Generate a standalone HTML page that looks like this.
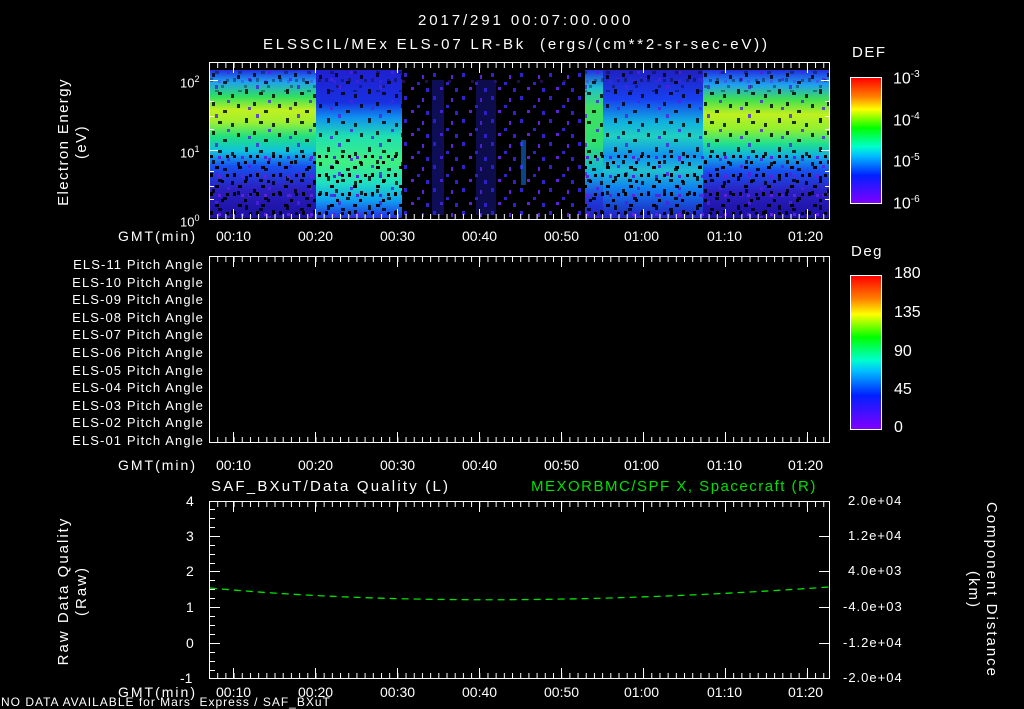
<!DOCTYPE html>
<html><head><meta charset="utf-8"><style>
body{margin:0;background:#000;width:1024px;height:708px;overflow:hidden;position:relative;font-family:"Liberation Sans",sans-serif;color:#fff}
.t{position:absolute;white-space:nowrap;font-size:14px;line-height:14px}
.seg{position:absolute}
.g{letter-spacing:2px}
</style></head><body>
<div class="t" style="left:418px;top:14px;font-size:15px;letter-spacing:2.9px">2017/291 00:07:00.000</div>
<div class="t" style="left:263px;top:38px;font-size:15px;letter-spacing:2.8px">ELSSCIL/MEx ELS-07 LR-Bk&nbsp; (ergs/(cm**2-sr-sec-eV))</div>

<!-- spectrogram -->
<div class="seg" style="left:210px;top:70px;width:106px;height:148px;background:linear-gradient(#2030e0 0%,#20a0f0 8%,#30e060 18%,#c0f020 27%,#a0f030 35%,#20e080 45%,#10c0e0 55%,#1850f0 65%,#2a20c0 80%,#1a10a0 100%)"></div>
<div class="seg" style="left:316px;top:70px;width:86px;height:148px;background:linear-gradient(#2020d0 0%,#1830e0 22%,#1090f0 32%,#20e0b0 45%,#40f080 62%,#20e0c0 76%,#10a0f0 88%,#2030e0 100%)"></div>
<div class="seg" style="left:585px;top:70px;width:18px;height:148px;background:linear-gradient(#2030e0 0%,#20c0d0 12%,#40e060 25%,#30e070 50%,#10b0e0 70%,#2040e0 85%,#2020c0 100%)"></div>
<div class="seg" style="left:603px;top:70px;width:100px;height:148px;background:linear-gradient(#2020c0 0%,#1840f0 20%,#10b0e0 35%,#20d0c0 45%,#1090f0 58%,#20c0d0 68%,#1080f0 80%,#2020c0 100%)"></div>
<div class="seg" style="left:703px;top:70px;width:126px;height:148px;background:linear-gradient(#2030e0 0%,#20a0f0 10%,#40e050 20%,#c0f020 30%,#90f030 40%,#20e090 50%,#10b0e0 58%,#1850f0 68%,#2a20c0 82%,#1a10a0 100%)"></div>

<!-- colorbars -->
<div class="seg" style="left:850px;top:77px;width:32px;height:127px;border:1px solid #fff;box-sizing:border-box;background:linear-gradient(#ff0000,#ff8000 15%,#ffff00 25%,#00ff00 40%,#00ffcc 55%,#00c0ff 62%,#0020ff 78%,#8000ff 100%)"></div>
<div class="seg" style="left:850px;top:275px;width:32px;height:155px;border:1px solid #fff;box-sizing:border-box;background:linear-gradient(#ff0000,#ff8000 15%,#ffff00 25%,#00ff00 40%,#00ffcc 55%,#00c0ff 62%,#0020ff 78%,#8000ff 100%)"></div>
<div class="t" style="left:852px;top:46px;font-size:15px;letter-spacing:1.5px">DEF</div>
<div class="t" style="left:893px;top:68px;font-size:16px">10<sup style="font-size:10px">-3</sup></div>
<div class="t" style="left:893px;top:110px;font-size:16px">10<sup style="font-size:10px">-4</sup></div>
<div class="t" style="left:893px;top:151px;font-size:16px">10<sup style="font-size:10px">-5</sup></div>
<div class="t" style="left:893px;top:193px;font-size:16px">10<sup style="font-size:10px">-6</sup></div>
<div class="t" style="left:851px;top:245px;font-size:15px;letter-spacing:1.5px">Deg</div>
<div class="t" style="left:894px;top:267px;font-size:16px">180</div>
<div class="t" style="left:894px;top:306px;font-size:16px">135</div>
<div class="t" style="left:894px;top:345px;font-size:16px">90</div>
<div class="t" style="left:894px;top:383px;font-size:16px">45</div>
<div class="t" style="left:894px;top:421px;font-size:16px">0</div>

<svg width="1024" height="708" style="position:absolute;left:0;top:0">
<defs>
<pattern id="tb" x="209" y="0" width="8.19" height="708" patternUnits="userSpaceOnUse"><line x1="0.5" y1="0" x2="0.5" y2="708" stroke="#fff"/></pattern>
<pattern id="sp" x="210" y="70" width="41" height="29" patternUnits="userSpaceOnUse">
<g fill="#000"><rect x="2" y="3" width="3" height="4"/><rect x="13" y="11" width="4" height="3"/><rect x="27" y="5" width="3" height="4"/><rect x="35" y="19" width="3" height="5"/><rect x="8" y="22" width="4" height="3"/><rect x="21" y="24" width="3" height="4"/></g>
<g fill="#5020e0"><rect x="17" y="1" width="3" height="3"/><rect x="5" y="15" width="3" height="4"/><rect x="38" y="8" width="3" height="3"/></g>
</pattern>
<pattern id="sp2" x="0" y="0" width="23" height="19" patternUnits="userSpaceOnUse">
<g fill="#000"><rect x="3" y="2" width="3" height="4"/><rect x="14" y="9" width="3" height="3"/><rect x="8" y="14" width="4" height="3"/><rect x="19" y="3" width="3" height="3"/></g>
<g fill="#6020e0"><rect x="11" y="4" width="3" height="3"/></g>
</pattern>
<pattern id="sb" x="402" y="70" width="29" height="23" patternUnits="userSpaceOnUse">
<g fill="#3020d0"><rect x="2" y="3" width="3" height="4"/><rect x="15" y="12" width="3" height="3"/><rect x="24" y="18" width="3" height="4"/></g>
<g fill="#6020e0"><rect x="9" y="17" width="3" height="3"/><rect x="20" y="5" width="2" height="4"/></g>
</pattern>
</defs>
<rect x="210" y="70" width="192" height="148" fill="url(#sp)" opacity=".8"/>
<rect x="585" y="70" width="244" height="148" fill="url(#sp)" opacity=".8"/>
<rect x="210" y="155" width="192" height="63" fill="url(#sp2)"/>
<rect x="585" y="155" width="244" height="63" fill="url(#sp2)"/>
<rect x="210" y="70" width="619" height="22" fill="url(#sp2)" opacity=".35"/>
<rect x="402" y="70" width="183" height="148" fill="url(#sb)"/>
<rect x="432" y="80" width="12" height="135" fill="#2020c0" opacity=".45"/>
<rect x="476" y="80" width="20" height="135" fill="#2020c0" opacity=".4"/>
<rect x="521" y="140" width="5" height="45" fill="#1070e0" opacity=".6"/>
<g fill="none" stroke="#fff">
<rect x="209.5" y="62.5" width="620" height="157"/>
<rect x="209.5" y="256.5" width="620" height="186"/>
<rect x="209.5" y="501.5" width="620" height="177"/>
</g>
<g fill="url(#tb)">
<rect x="210" y="63" width="619" height="5"/><rect x="210" y="214" width="619" height="5"/>
<rect x="210" y="257" width="619" height="5"/><rect x="210" y="437" width="619" height="5"/>
<rect x="210" y="502" width="619" height="5"/><rect x="210" y="673" width="619" height="5"/>
</g>
<g stroke="#fff">
<path d="M233.5 63v10M315.5 63v10M397.5 63v10M479.5 63v10M561.5 63v10M643.5 63v10M725.5 63v10M807.5 63v10M233.5 209v10M315.5 209v10M397.5 209v10M479.5 209v10M561.5 209v10M643.5 209v10M725.5 209v10M807.5 209v10"/>
<path d="M233.5 257v10M315.5 257v10M397.5 257v10M479.5 257v10M561.5 257v10M643.5 257v10M725.5 257v10M807.5 257v10M233.5 432v10M315.5 432v10M397.5 432v10M479.5 432v10M561.5 432v10M643.5 432v10M725.5 432v10M807.5 432v10"/>
<path d="M233.5 502v10M315.5 502v10M397.5 502v10M479.5 502v10M561.5 502v10M643.5 502v10M725.5 502v10M807.5 502v10M233.5 668v10M315.5 668v10M397.5 668v10M479.5 668v10M561.5 668v10M643.5 668v10M725.5 668v10M807.5 668v10"/>
<path d="M210 80.5h8M210 150.5h8M210 101.5h4M210 116.5h4M210 129.5h4M210 171.5h4M210 186.5h4M210 199.5h4M829 80.5h-8M829 150.5h-8M829 101.5h-4M829 116.5h-4M829 129.5h-4M829 171.5h-4M829 186.5h-4M829 199.5h-4"/>
<path d="M210 536.5h10M210 571.5h10M210 607.5h10M210 643.5h10M829 536.5h-10M829 571.5h-10M829 607.5h-10M829 643.5h-10M210 509.5h5M210 518.5h5M210 527.5h5M210 545.5h5M210 554.5h5M210 563.5h5M210 580.5h5M210 589.5h5M210 598.5h5M210 616.5h5M210 625.5h5M210 634.5h5M210 652.5h5M210 661.5h5M210 670.5h5"/>
</g>
<path d="M210 588 Q470 612 829 587" fill="none" stroke="#00e000" stroke-width="1.3" stroke-dasharray="7 5"/>
</svg>
<div class="t" style="left:-17px;top:124px;width:180px;text-align:center;transform:rotate(-90deg);font-size:15px;line-height:18px;letter-spacing:1.4px">Electron Energy<br>(eV)</div>
<div class="t" style="left:-37px;top:573px;width:220px;text-align:center;transform:rotate(-90deg);font-size:15px;line-height:18px;letter-spacing:2px">Raw Data Quality<br>(Raw)</div>
<div class="t" style="left:872px;top:572px;width:220px;text-align:center;transform:rotate(90deg);font-size:15px;line-height:18px;letter-spacing:2px">Component Distance<br>(km)</div>

<div class="t" style="left:180px;top:72px;font-size:13px">10<sup style="font-size:9px">2</sup></div>
<div class="t" style="left:180px;top:142px;font-size:13px">10<sup style="font-size:9px">1</sup></div>
<div class="t" style="left:180px;top:211px;font-size:13px">10<sup style="font-size:9px">0</sup></div>

<div class="t g" style="left:118px;top:229px">GMT(min)</div>
<div class="t g" style="left:118px;top:458px">GMT(min)</div>
<div class="t g" style="left:118px;top:685px">GMT(min)</div>
<div class="t" style="left:216px;top:229px">00:10</div>
<div class="t" style="left:298px;top:229px">00:20</div><div class="t" style="left:380px;top:229px">00:30</div><div class="t" style="left:462px;top:229px">00:40</div><div class="t" style="left:544px;top:229px">00:50</div><div class="t" style="left:624px;top:229px">01:00</div><div class="t" style="left:707px;top:229px">01:10</div><div class="t" style="left:788px;top:229px">01:20</div>
<div class="t" style="left:216px;top:458px">00:10</div><div class="t" style="left:298px;top:458px">00:20</div><div class="t" style="left:380px;top:458px">00:30</div><div class="t" style="left:462px;top:458px">00:40</div><div class="t" style="left:544px;top:458px">00:50</div><div class="t" style="left:624px;top:458px">01:00</div><div class="t" style="left:707px;top:458px">01:10</div><div class="t" style="left:788px;top:458px">01:20</div>
<div class="t" style="left:216px;top:685px">00:10</div><div class="t" style="left:298px;top:685px">00:20</div><div class="t" style="left:380px;top:685px">00:30</div><div class="t" style="left:462px;top:685px">00:40</div><div class="t" style="left:544px;top:685px">00:50</div><div class="t" style="left:624px;top:685px">01:00</div><div class="t" style="left:707px;top:685px">01:10</div><div class="t" style="left:788px;top:685px">01:20</div>

<div class="t" style="right:820px;top:256px;text-align:right;line-height:17.6px;font-size:13px;letter-spacing:1.1px">ELS-11 Pitch Angle<br>ELS-10 Pitch Angle<br>ELS-09 Pitch Angle<br>ELS-08 Pitch Angle<br>ELS-07 Pitch Angle<br>ELS-06 Pitch Angle<br>ELS-05 Pitch Angle<br>ELS-04 Pitch Angle<br>ELS-03 Pitch Angle<br>ELS-02 Pitch Angle<br>ELS-01 Pitch Angle</div>

<div class="t" style="left:211px;top:480px;font-size:15px;letter-spacing:2.2px">SAF_BXuT/Data Quality (L)</div>
<div class="t" style="left:531px;top:480px;font-size:15px;color:#00e000;letter-spacing:1.5px">MEXORBMC/SPF X, Spacecraft (R)</div>

<div class="t" style="left:186px;top:494px">4</div><div class="t" style="left:186px;top:529px">3</div><div class="t" style="left:186px;top:564px">2</div><div class="t" style="left:186px;top:600px">1</div><div class="t" style="left:186px;top:636px">0</div><div class="t" style="left:180px;top:671px">-1</div>
<div class="t" style="left:848px;top:494px;font-size:13px;letter-spacing:1px">2.0e+04</div>
<div class="t" style="left:848px;top:529px;font-size:13px;letter-spacing:1px">1.2e+04</div>
<div class="t" style="left:848px;top:564px;font-size:13px;letter-spacing:1px">4.0e+03</div>
<div class="t" style="left:843px;top:600px;font-size:13px;letter-spacing:1px">-4.0e+03</div>
<div class="t" style="left:843px;top:636px;font-size:13px;letter-spacing:1px">-1.2e+04</div>
<div class="t" style="left:843px;top:671px;font-size:13px;letter-spacing:1px">-2.0e+04</div>
<div class="t" style="left:1px;top:696px;font-size:12px;line-height:12px;letter-spacing:1px">NO DATA AVAILABLE for Mars&nbsp; Express / SAF_BXuT</div>
</body></html>
